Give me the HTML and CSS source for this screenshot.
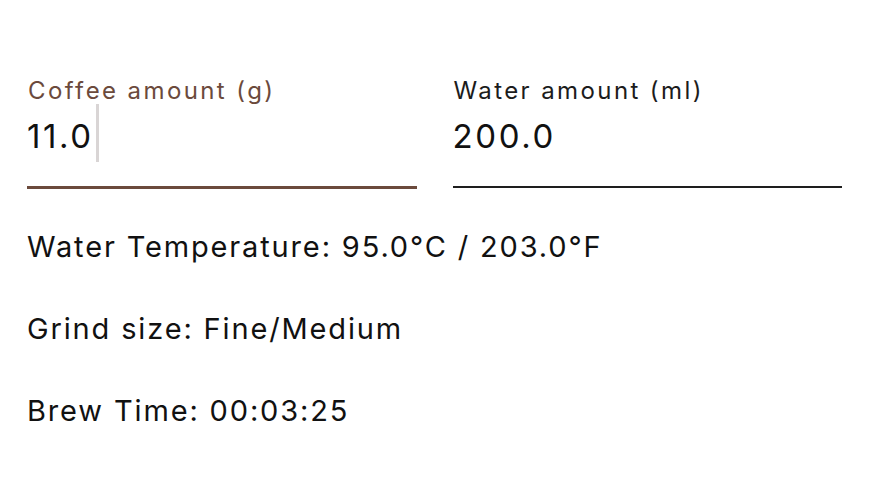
FILE: index.html
```html
<!DOCTYPE html>
<html>
<head>
<meta charset="utf-8">
<link rel="stylesheet" href="styles.css">
</head>
<body>
<main class="page">
  <div class="fields">
    <div class="field field--focused">
      <div class="field-label">Coffee amount (g)</div>
      <div class="field-value"><span class="value-text">11.0</span><span class="caret"></span></div>
    </div>
    <div class="field">
      <div class="field-label">Water amount (ml)</div>
      <div class="field-value"><span class="value-text">200.0</span></div>
    </div>
  </div>
  <p class="info">Water Temperature: 95.0°C / 203.0°F</p>
  <p class="info">Grind size: Fine/Medium</p>
  <p class="info">Brew Time: 00:03:25</p>
</main>
</body>
</html>
```
FILE: styles.css
```css
html, body {
  margin: 0;
  padding: 0;
  background: #ffffff;
}
body {
  font-family: Inter, Roboto, "Liberation Sans", sans-serif;
  color: #111111;
}
.page {
  padding: 74px 28px 0 27px;
}
.fields {
  display: flex;
  gap: 36px;
}
.field {
  flex: 1;
  border-bottom: 2px solid #1e1e1e;
  height: 114px;
  box-sizing: border-box;
}
.field--focused {
  border-bottom: 3px solid #6b4a3c;
  height: 115px;
}
.field-label {
  font-size: 24px;
  letter-spacing: 2.4px;
  line-height: 34px;
  color: #1c1c1c;
  padding-left: 1px;
}
.field--focused .field-label {
  color: #6b4a3c;
}
.field-value {
  font-size: 33px;
  line-height: 44px;
  margin-top: 6px;
  color: #111111;
  display: flex;
  align-items: flex-start;
  height: 44px;
}
.value-text {
  letter-spacing: 2.6px;
  margin-right: -2.6px;
}
.caret {
  display: block;
  flex: none;
  width: 3px;
  height: 58px;
  margin-top: -10px;
  background: #d9d5d5;
  margin-left: 5px;
}
.info {
  margin: 0;
  font-size: 29px;
  letter-spacing: 1.85px;
  line-height: 82px;
}
.fields + .info {
  margin-top: 17px;
}
```
